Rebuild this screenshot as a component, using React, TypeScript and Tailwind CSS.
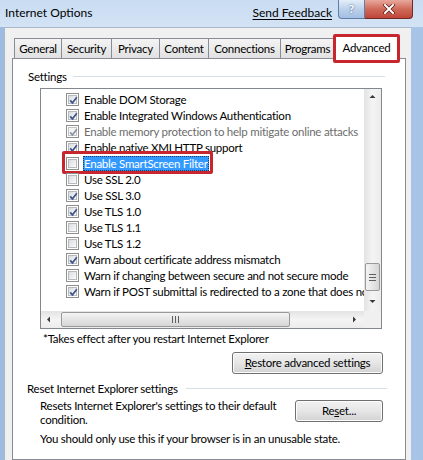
import React from "react"

type Row = { label: string; checked: boolean; disabled?: boolean; selected?: boolean }

const rows: Row[] = [
  { label: "Enable DOM Storage", checked: true },
  { label: "Enable Integrated Windows Authentication", checked: true },
  { label: "Enable memory protection to help mitigate online attacks", checked: true, disabled: true },
  { label: "Enable native XMLHTTP support", checked: true },
  { label: "Enable SmartScreen Filter", checked: false, selected: true },
  { label: "Use SSL 2.0", checked: false },
  { label: "Use SSL 3.0", checked: true },
  { label: "Use TLS 1.0", checked: true },
  { label: "Use TLS 1.1", checked: false },
  { label: "Use TLS 1.2", checked: false },
  { label: "Warn about certificate address mismatch", checked: true },
  { label: "Warn if changing between secure and not secure mode", checked: false },
  { label: "Warn if POST submittal is redirected to a zone that does not permit posts", checked: true },
]

const tabs = [
  { name: "General", w: "w-[48px]" },
  { name: "Security", w: "w-[51px]" },
  { name: "Privacy", w: "w-[49px]" },
  { name: "Content", w: "w-[50px]" },
  { name: "Connections", w: "w-[73px]" },
  { name: "Programs", w: "w-[55px]" },
]

function CheckBox({ checked, disabled }: { checked: boolean; disabled?: boolean }) {
  return (
    <span className="w-[13px] h-[13px] shrink-0 border border-[#8e8f8f] bg-white p-px flex">
      <span
        className={`relative flex-1 border ${
          disabled ? "border-[#c4c4c4] bg-[#f4f4f4]" : "border-[#b6b9be] bg-gradient-to-br from-[#d9dce1] to-[#fbfbfb]"
        }`}
      >
        {checked && (
          <svg className="absolute -left-[2px] -top-[2px]" width="13" height="13" viewBox="0 0 13 13">
            <path
              d="M3.2 6.4 L5.4 8.9 L9.8 3.2"
              fill="none"
              stroke={disabled ? "#8a93a8" : "#3c5189"}
              strokeWidth="1.7"
            />
          </svg>
        )}
      </span>
    </span>
  )
}

function Arrow({ dir }: { dir: "up" | "down" | "left" | "right" }) {
  const pts = {
    up: "0.5,4 3.5,1 6.5,4",
    down: "0.5,1 3.5,4 6.5,1",
    left: "4,0.5 1,3.5 4,6.5",
    right: "1,0.5 4,3.5 1,6.5",
  }[dir]
  return (
    <svg width="7" height="7" viewBox="0 0 7 7">
      <polygon points={pts} fill="#3a3a3a" />
    </svg>
  )
}

function WinButton({ children, w }: { children: React.ReactNode; w: string }) {
  return (
    <div
      className={`${w} h-[22px] rounded-[3px] border border-[#707070] bg-gradient-to-b from-[#f2f2f2] via-[#e6e6e6] to-[#d2d2d2] shadow-[inset_0_0_0_1px_#fcfcfc] flex items-center justify-center text-black`}
    >
      {children}
    </div>
  )
}

export default function App() {
  return (
    <div
      className="w-[423px] h-[460px] overflow-hidden flex flex-col bg-gradient-to-r from-[#9dbbe0] via-[#c6daf1] to-[#a7c3e6] text-black"
      style={{ fontFamily: "Lato, 'Noto Sans', sans-serif" }}
    >
      {/* title bar */}
      <div className="h-[27px] shrink-0 flex items-start bg-gradient-to-b from-[#c9dcf2] to-[#d3e3f5]">
        <div className="pl-[5px] pt-[5px] text-[12px] leading-[16px]">Internet Options</div>
        <div className="flex-1" />
        <div className="pt-[5px] text-[12px] leading-[16px] underline underline-offset-2">Send Feedback</div>
        <div className="ml-[6px] flex mr-[10px]">
          <div className="w-[27px] h-[19px] rounded-bl-[4px] border border-t-0 border-[#5f7ea8] bg-gradient-to-b from-[#e4eefa] via-[#bcd1ec] to-[#a3bfe3] flex items-center justify-center text-white font-bold text-[12px] [text-shadow:0_0_2px_#30486e]">
            ?
          </div>
          <div className="w-[48px] h-[19px] rounded-br-[4px] border border-l-0 border-t-0 border-[#6e2b24] bg-gradient-to-b from-[#e8a89c] via-[#cf6a5a] to-[#c0453a] flex items-center justify-center">
            <svg width="12" height="10" viewBox="0 0 12 10">
              <path d="M2 1 L10 9 M10 1 L2 9" stroke="#5a1c16" strokeWidth="3.4" strokeLinecap="square" />
              <path d="M2 1 L10 9 M10 1 L2 9" stroke="#ffffff" strokeWidth="2" strokeLinecap="square" />
            </svg>
          </div>
        </div>
      </div>

      {/* client area */}
      <div className="flex-1 ml-[4px] mr-[12px] bg-[#f0f0f0] border-l border-t border-[#a8b9cc] flex flex-col pl-[7px] pr-[5px] pt-[9px] text-[11.5px] tracking-[-0.25px]">
        {/* tab strip */}
        <div className="h-[21px] flex items-end pl-[2px] relative z-10">
          {tabs.map((t) => (
            <div
              key={t.name}
              className={`${t.w} h-[20px] -mr-px border border-b-0 border-[#898c95] bg-gradient-to-b from-[#f4f4f4] to-[#e1e1e1] flex items-center justify-center whitespace-nowrap`}
            >
              {t.name}
            </div>
          ))}
          <div className="relative w-[63px] h-[23px] ml-[1px] -mb-px border border-b-0 border-[#898c95] bg-white flex items-start justify-center pt-[2px]">
            Advanced
            <div className="absolute -left-[3px] -top-[3px] w-[67px] h-[29px] border-[3px] border-[#c8262f] rounded-[2px]" />
          </div>
        </div>

        {/* tab page */}
        <div className="flex-1 bg-white border border-[#898c95] flex flex-col">
          <div className="mt-[10px] ml-[15px] w-[357px] h-[15px] flex items-center leading-[15px]">
            <span className="mr-[6px]">Settings</span>
            <span className="flex-1 h-px bg-[#d5dfe5]" />
          </div>

          {/* list box */}
          <div className="mt-[4px] ml-[27px] w-[342px] h-[241px] border border-[#828790] flex flex-col">
            <div className="flex-1 flex min-h-0">
              <div className="flex-1 min-w-0 overflow-hidden pt-[2px]">
                {rows.map((r) => (
                  <div key={r.label} className="h-[16px] flex items-center pl-[25px] whitespace-nowrap relative">
                    <CheckBox checked={r.checked} disabled={r.disabled} />
                    {r.selected ? (
                      <span className="ml-[4px] h-[15px] px-px bg-[#3399ff] text-white leading-[15px] outline-1 outline-dotted outline-[#1a3a66] -outline-offset-1">
                        {r.label}
                      </span>
                    ) : (
                      <span className={`ml-[5px] leading-[15px] ${r.disabled ? "text-[#6d6d6d]" : ""}`}>{r.label}</span>
                    )}
                    {r.selected && (
                      <div className="absolute left-[21px] -top-[4px] w-[151px] h-[23px] border-[3px] border-[#c8262f] rounded-[2px]" />
                    )}
                  </div>
                ))}
              </div>
              {/* vertical scroll bar */}
              <div className="w-[17px] flex flex-col bg-gradient-to-r from-[#e3e3e3] via-[#f4f4f4] to-[#ececec]">
                <div className="h-[17px] flex items-center justify-center">
                  <Arrow dir="up" />
                </div>
                <div className="flex-1 flex flex-col justify-end pb-[3px]">
                  <div className="h-[28px] mx-px rounded-[2px] border border-[#999] bg-gradient-to-r from-[#f4f4f4] to-[#d6d6d6] flex flex-col items-center justify-center gap-[2px]">
                    <span className="w-[7px] h-px bg-[#5f5f5f]" />
                    <span className="w-[7px] h-px bg-[#5f5f5f]" />
                    <span className="w-[7px] h-px bg-[#5f5f5f]" />
                  </div>
                </div>
                <div className="h-[17px] flex items-center justify-center">
                  <Arrow dir="down" />
                </div>
              </div>
            </div>
            {/* horizontal scroll bar */}
            <div className="h-[17px] flex">
              <div className="flex-1 flex bg-gradient-to-b from-[#e3e3e3] via-[#f4f4f4] to-[#ececec]">
                <div className="w-[17px] flex items-center justify-center">
                  <Arrow dir="left" />
                </div>
                <div className="flex-1 flex items-center pr-[56px] pl-[3px]">
                  <div className="w-[229px] h-[15px] rounded-[2px] border border-[#999] bg-gradient-to-b from-[#f4f4f4] to-[#d6d6d6] flex items-center justify-center gap-[2px]">
                    <span className="w-px h-[7px] bg-[#5f5f5f]" />
                    <span className="w-px h-[7px] bg-[#5f5f5f]" />
                    <span className="w-px h-[7px] bg-[#5f5f5f]" />
                  </div>
                </div>
                <div className="w-[17px] flex items-center justify-center">
                  <Arrow dir="right" />
                </div>
              </div>
              <div className="w-[17px] bg-[#f0f0f0]" />
            </div>
          </div>

          <div className="mt-[2px] ml-[30px] leading-[15px]">*Takes effect after you restart Internet Explorer</div>

          <div className="mt-[6px] flex justify-end pr-[22px]">
            <WinButton w="w-[151px]">
              <span>
                <span className="underline">R</span>estore advanced settings
              </span>
            </WinButton>
          </div>

          <div className="mt-[7px] ml-[14px] w-[360px] h-[15px] flex items-center leading-[15px]">
            <span className="mr-[8px]">Reset Internet Explorer settings</span>
            <span className="flex-1 h-px bg-[#d5dfe5]" />
          </div>

          <div className="mt-[3px] ml-[27px] mr-[22px] flex items-start">
            <div className="flex-1 leading-[14px] whitespace-nowrap">
              Resets Internet Explorer&apos;s settings to their default
              <br />
              condition.
            </div>
            <div className="mt-[1px]">
              <WinButton w="w-[88px]">
                <span>
                  Re<span className="underline">s</span>et...
                </span>
              </WinButton>
            </div>
          </div>

          <div className="mt-[4px] ml-[27px] leading-[15px]">You should only use this if your browser is in an unusable state.</div>
        </div>
      </div>
    </div>
  )
}
